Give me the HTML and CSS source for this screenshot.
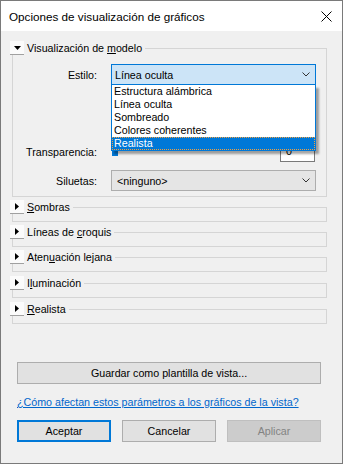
FILE: index.html
```html
<!DOCTYPE html>
<html lang="es">
<head>
    <meta charset="UTF-8">
    <meta name="viewport" content="width=device-width, initial-scale=1.0">
    <title>Opciones de visualización de gráficos</title>
    <link rel="stylesheet" href="styles.css">
</head>
<body>
    <div class="dialog">
        <div class="titlebar">
            <span class="title">Opciones de visualización de gráficos</span>
            <svg class="close" width="11" height="11" viewBox="0 0 11 11">
                <path d="M0.5 0.5 L10.5 10.5 M10.5 0.5 L0.5 10.5" stroke="#000" stroke-width="1" fill="none"/>
            </svg>
        </div>

        <div class="content">
            <fieldset class="group group-open">
                <legend>
                    <span class="toggle">
                        <svg width="7" height="4" viewBox="0 0 7 4"><polygon points="0,0 7,0 3.5,4" fill="#000"/></svg>
                    </span>
                    <span>Visualización de <u>m</u>odelo</span>
                </legend>

                <div class="form-grid">
                    <label class="row-1">Estilo:</label>
                    <div class="combo-wrap row-1">
                        <div class="combo combo-active">
                            <span>Línea oculta</span>
                            <svg width="8" height="5" viewBox="0 0 8 5"><path d="M0.5 0.5 L4 4 L7.5 0.5" stroke="#333" fill="none"/></svg>
                        </div>
                        <ul class="dropdown">
                            <li>Estructura alámbrica</li>
                            <li>Línea oculta</li>
                            <li>Sombreado</li>
                            <li>Colores coherentes</li>
                            <li class="selected">Realista</li>
                        </ul>
                    </div>

                    <label class="row-2">Transparencia:</label>
                    <div class="slider-row row-2">
                        <div class="slider"><span class="thumb"></span></div>
                        <div class="spin">0</div>
                    </div>

                    <label class="row-3">Siluetas:</label>
                    <div class="combo row-3">
                        <span>&lt;ninguno&gt;</span>
                        <svg width="8" height="5" viewBox="0 0 8 5"><path d="M0.5 0.5 L4 4 L7.5 0.5" stroke="#333" fill="none"/></svg>
                    </div>
                </div>
            </fieldset>

            <fieldset class="group">
                <legend>
                    <span class="toggle"><svg width="4" height="7" viewBox="0 0 4 7"><polygon points="0,0 4,3.5 0,7" fill="#000"/></svg></span>
                    <span><u>S</u>ombras</span>
                </legend>
            </fieldset>

            <fieldset class="group">
                <legend>
                    <span class="toggle"><svg width="4" height="7" viewBox="0 0 4 7"><polygon points="0,0 4,3.5 0,7" fill="#000"/></svg></span>
                    <span>Líneas de <u>c</u>roquis</span>
                </legend>
            </fieldset>

            <fieldset class="group">
                <legend>
                    <span class="toggle"><svg width="4" height="7" viewBox="0 0 4 7"><polygon points="0,0 4,3.5 0,7" fill="#000"/></svg></span>
                    <span>Aten<u>u</u>ación lejana</span>
                </legend>
            </fieldset>

            <fieldset class="group group-spaced">
                <legend>
                    <span class="toggle"><svg width="4" height="7" viewBox="0 0 4 7"><polygon points="0,0 4,3.5 0,7" fill="#000"/></svg></span>
                    <span>I<u>l</u>uminación</span>
                </legend>
            </fieldset>

            <fieldset class="group group-spaced">
                <legend>
                    <span class="toggle"><svg width="4" height="7" viewBox="0 0 4 7"><polygon points="0,0 4,3.5 0,7" fill="#000"/></svg></span>
                    <span><u>R</u>ealista</span>
                </legend>
            </fieldset>

            <div class="footer">
                <button class="btn btn-wide">Guardar como plantilla de vista...</button>
                <a class="help-link" href="#">¿Cómo afectan estos parámetros a los gráficos de la vista?</a>
                <div class="actions">
                    <button class="btn btn-default">Aceptar</button>
                    <button class="btn">Cancelar</button>
                    <button class="btn btn-disabled" disabled>Aplicar</button>
                </div>
            </div>
        </div>
    </div>
</body>
</html>
```

FILE: styles.css
```css
:root {
    --accent: #0078d7;
    --group-border: #d5d5d5;
    --button-bg: #e1e1e1;
    --button-border: #adadad;
}

body {
    margin: 0;
    font-family: "Liberation Sans", Arial, sans-serif;
    font-size: 10.7px;
    color: #000;
    background: #fff;
}

.dialog {
    width: 343px;
    height: 464px;
    box-sizing: border-box;
    border: 1px solid #7a7a7a;
    display: flex;
    flex-direction: column;
    background: #f0f0f0;
}

.titlebar {
    height: 30px;
    flex-shrink: 0;
    background: #fff;
    display: flex;
    align-items: center;
    justify-content: space-between;
    padding: 0 10px 0 8px;
}

.title {
    font-size: 11.7px;
}

.close {
    display: block;
}

.content {
    flex: 1;
    display: flex;
    flex-direction: column;
    padding-top: 10px;
}

/* collapsible group boxes */
.group {
    margin: 3px 15px 0 11px;
    padding: 0 0 7px;
    border: 1px solid var(--group-border);
    min-width: 0;
}

.group-spaced {
    margin-top: 4px;
}

.group-open {
    margin-top: 0;
    padding: 9px 9px 5px 0;
}

legend {
    display: flex;
    align-items: center;
    gap: 3px;
    height: 14px;
    line-height: 14px;
    padding: 0 3px 0 0;
    margin-left: -3px;
}

.toggle {
    width: 14px;
    height: 13px;
    background: #fbfbfb;
    border-bottom: 1px solid #a0a0a0;
    display: flex;
    align-items: center;
    justify-content: center;
}

.toggle svg {
    display: block;
}

/* form inside the open group */
.form-grid {
    display: grid;
    grid-template-columns: 84px 205px;
    column-gap: 14px;
    align-items: center;
}

.form-grid label {
    text-align: right;
}

.row-2 {
    margin-top: 56px;
}

.row-3 {
    margin-top: 8px;
}

.combo-wrap {
    position: relative;
}

.combo {
    height: 21px;
    box-sizing: border-box;
    border: 1px solid var(--button-border);
    background: #e5e5e5;
    display: flex;
    align-items: center;
    justify-content: space-between;
    padding: 0 5px 0 5px;
}

.combo svg {
    display: block;
}

.combo-active {
    background: #cce4f7;
    border-color: var(--accent);
    padding-left: 3px;
}

.dropdown {
    position: absolute;
    top: 100%;
    left: 0;
    right: 0;
    z-index: 2;
    margin: 0;
    padding: 0;
    list-style: none;
    background: #fff;
    border: 1px solid var(--accent);
    border-top: none;
    box-shadow: 3px 3px 2px rgba(0, 0, 0, 0.35);
}

.dropdown li {
    height: 13px;
    line-height: 13px;
    padding-left: 2px;
}

.dropdown .selected {
    background: var(--accent);
    color: #fff;
    outline: 1px dotted #f0a040;
    outline-offset: -1px;
}

.slider-row {
    height: 21px;
    display: flex;
    align-items: flex-start;
    justify-content: space-between;
}

.slider {
    flex: 1;
    padding: 5px 0 0 1px;
}

.thumb {
    display: block;
    width: 6px;
    height: 10px;
    background: var(--accent);
}

.spin {
    width: 35px;
    height: 21px;
    box-sizing: border-box;
    margin-right: 1px;
    border: 1px solid #7a7a7a;
    background: #fff;
    padding-left: 5px;
    line-height: 19px;
}

/* bottom buttons */
.footer {
    margin-top: auto;
    display: flex;
    flex-direction: column;
    padding: 0 21px 21px 16px;
}

.btn {
    font-family: inherit;
    font-size: inherit;
    color: #000;
    height: 22px;
    background: var(--button-bg);
    border: 1px solid var(--button-border);
    padding: 0;
}

.help-link {
    margin: 11px 0 0 0;
    color: #0066cc;
    line-height: 14px;
}

.actions {
    margin-top: 11px;
    display: grid;
    grid-template-columns: repeat(3, 1fr);
    gap: 11px;
}

.btn-default {
    border: 2px solid var(--accent);
}

.btn-disabled {
    background: #cccccc;
    border-color: #bfbfbf;
    color: #838383;
}
```
